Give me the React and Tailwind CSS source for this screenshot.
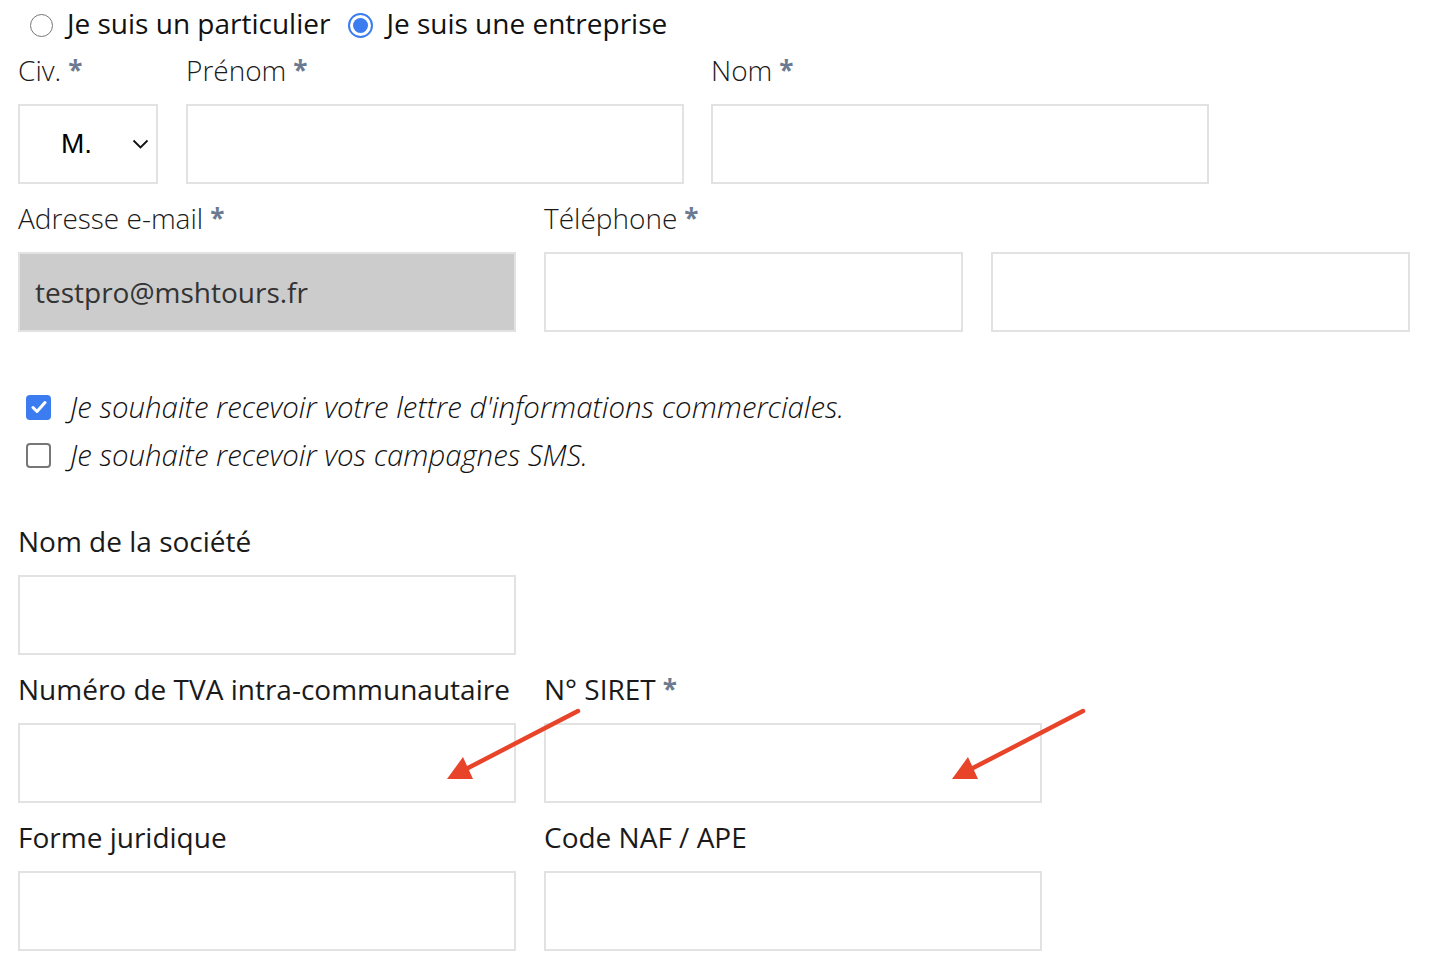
import React from 'react';

const font = { fontFamily: '"Open Sans", "Noto Sans", sans-serif' };

const Star = () => <span className="ml-[7px] text-[26px] font-bold text-[#6b7a90] align-top">*</span>;

const Label = ({ children, required, light }) => (
    <div className={`h-[40px] leading-[40px] text-[28px] text-[#1a1a1a] whitespace-nowrap ${light ? 'font-light' : 'font-normal'}`}>
        {children}
        {required && <Star />}
    </div>
);

const Field = ({ label, required, light, width = 'w-[498px]', children }) => (
    <div className="flex flex-col">
        <Label required={required} light={light}>{label}</Label>
        <div className={`mt-[14px] h-[80px] border-2 border-[#e2e2e2] bg-white ${width}`}>{children}</div>
    </div>
);

const Arrow = ({ x }) => (
    <svg className="absolute top-[700px]" style={{ left: x }} width="150" height="90" viewBox="0 0 150 90">
        <line x1="138" y1="11" x2="28" y2="68" stroke="#e8442a" strokeWidth="4.5" strokeLinecap="round" />
        <polygon points="7,79 23,57 33,79" fill="#e8442a" />
    </svg>
);

export default function App() {
    return (
        <div className="relative w-[1448px] h-[972px] bg-white pl-[18px]" style={font}>
            {/* type de client */}
            <div className="h-[50px] flex items-center text-[28px] text-[#111]">
                <span className="ml-[12px] w-[23px] h-[23px] rounded-full border-[1.5px] border-[#777] bg-white" />
                <span className="ml-[14px] mb-[5px]">Je suis un particulier</span>
                <span className="ml-[18px] w-[25px] h-[25px] rounded-full border-[2px] border-[#3b7cf0] flex items-center justify-center">
                    <span className="w-[15px] h-[15px] rounded-full bg-[#3b7cf0]" />
                </span>
                <span className="ml-[13px] mb-[5px]">Je suis une entreprise</span>
            </div>

            <div className="flex gap-[28px]">
                <Field label="Civ." required light width="w-[140px]">
                    <div className="h-full flex items-center pl-[41px] pr-[6px] justify-between text-[28px] text-black" style={{ fontFamily: '"Liberation Sans", Arial, sans-serif' }}>
                        <span>M.</span>
                        <svg width="17" height="10" viewBox="0 0 17 10" className="mr-[1px]">
                            <path d="M1.5 1.5 L8.5 8.5 L15.5 1.5" fill="none" stroke="#111" strokeWidth="1.8" />
                        </svg>
                    </div>
                </Field>
                <Field label="Prénom" required light />
                <div className="-ml-[1px]">
                    <Field label="Nom" required light />
                </div>
            </div>

            <div className="flex gap-[28px] mt-[14px]">
                <div className="flex flex-col">
                    <Label required light>Adresse e-mail</Label>
                    <div className="mt-[14px] h-[80px] w-[498px] border-2 border-[#e2e2e2] bg-[#cccccc] flex items-center pl-[15px] text-[28px] text-[#333]">
                        testpro@mshtours.fr
                    </div>
                </div>
                <Field label="Téléphone" required light width="w-[419px]" />
                <div className="flex flex-col">
                    <div className="h-[40px]" />
                    <div className="mt-[14px] h-[80px] w-[419px] border-2 border-[#e2e2e2] bg-white" />
                </div>
            </div>

            {/* abonnements */}
            <div className="mt-[51px] flex flex-col text-[29.4px] italic font-light text-[#111]">
                <div className="h-[48px] flex items-center">
                    <span className="ml-[8px] w-[25px] h-[25px] rounded-[4px] bg-[#3b7cf0] flex items-center justify-center">
                        <svg width="16" height="14" viewBox="0 0 16 14">
                            <path d="M2 7.5 L6 11.5 L14 2.5" fill="none" stroke="#fff" strokeWidth="3" strokeLinecap="round" strokeLinejoin="round" />
                        </svg>
                    </span>
                    <span className="ml-[19px]">Je souhaite recevoir votre lettre d'informations commerciales.</span>
                </div>
                <div className="h-[48px] flex items-center">
                    <span className="ml-[8px] w-[25px] h-[25px] rounded-[4px] border-2 border-[#777] bg-white" />
                    <span className="ml-[19px]">Je souhaite recevoir vos campagnes SMS.</span>
                </div>
            </div>

            {/* société */}
            <div className="mt-[42px]">
                <Field label="Nom de la société" />
            </div>
            <div className="flex gap-[28px] mt-[14px]">
                <Field label="Numéro de TVA intra-communautaire" />
                <Field label="N° SIRET" required />
            </div>
            <div className="flex gap-[28px] mt-[14px]">
                <Field label="Forme juridique" />
                <Field label="Code NAF / APE" />
            </div>

            <Arrow x={440} />
            <Arrow x={945} />
        </div>
    );
}
